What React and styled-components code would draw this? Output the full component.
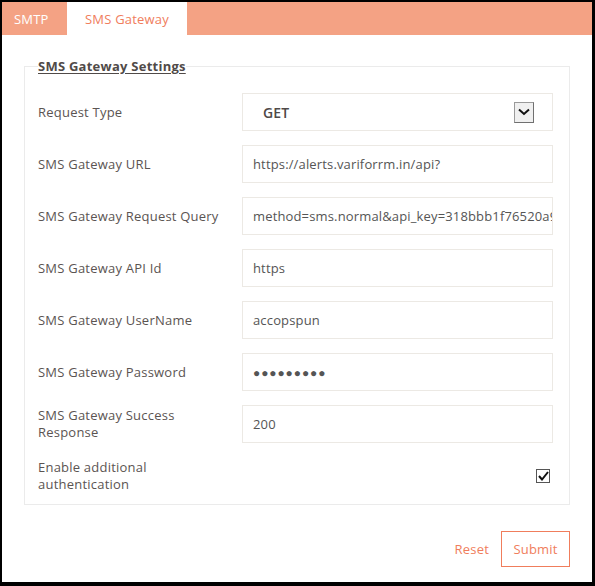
import React from "react";
import styled, { createGlobalStyle } from "styled-components";

const Global = createGlobalStyle`
  html, body { margin: 0; padding: 0; background: #000; }
  body { font-family: "Open Sans", "Noto Sans", sans-serif; }
  * { box-sizing: border-box; }
`;

const Frame = styled.div`
  width: 595px;
  height: 586px;
  background: #fff;
  border-style: solid;
  border-color: #000;
  border-width: 2px 3px 4px 2px;
  display: flex;
  flex-direction: column;
`;

const TabBar = styled.div`
  height: 33px;
  background: #f4a284;
  display: flex;
  flex-shrink: 0;
`;

const Tab = styled.div`
  width: ${(p) => p.$w}px;
  padding-left: ${(p) => p.$pl}px;
  display: flex;
  align-items: center;
  font-size: 13px;
  letter-spacing: 0.2px;
  background: ${(p) => (p.$active ? "#fff" : "transparent")};
  color: ${(p) => (p.$active ? "#f07d5c" : "#fff")};
`;

const Body = styled.div`
  padding: 22px 22px 0 22px;
`;

const Fieldset = styled.fieldset`
  margin: 0;
  border: 1px solid #ebebeb;
  padding: 18px 14px 9px 13px;
  min-width: 0;
`;

const Legend = styled.legend`
  padding: 0;
  font-size: 13px;
  line-height: 18px;
  font-weight: 700;
  letter-spacing: 0.25px;
  color: #504a48;
  text-decoration: underline;
  text-underline-offset: 2px;
`;

const Grid = styled.div`
  display: grid;
  grid-template-columns: 204px 311px;
  grid-auto-rows: 38px;
  row-gap: 14px;
`;

const Label = styled.div`
  max-width: 192px;
  align-self: center;
  font-size: 13px;
  line-height: 17px;
  letter-spacing: 0.22px;
  color: #5b5452;
`;

const Field = styled.div`
  border: 1px solid #ece9e4;
  display: flex;
  align-items: center;
  padding: 0 10px;
  font-size: 13px;
  letter-spacing: 0.15px;
  color: #555;
  overflow: hidden;
  white-space: nowrap;
`;

const SelectValue = styled.span`
  flex: 1;
  padding-left: 10px;
  font-size: 14px;
  font-weight: 600;
  color: #4f4a48;
`;

const ArrowBox = styled.span`
  width: 20px;
  height: 21px;
  margin-right: 8px;
  border: 1px solid #9a9a9a;
  border-right-color: #707070;
  border-bottom-color: #707070;
  background: #f0f0f0;
  display: flex;
  align-items: center;
  justify-content: center;
`;

const Dots = styled.span`
  font-size: 12px;
  letter-spacing: 0.9px;
  color: #555;
`;

const CheckCell = styled.div`
  display: flex;
  align-items: center;
  justify-content: flex-end;
  padding-right: 3px;
`;

const CheckBox = styled.span`
  width: 14px;
  height: 14px;
  border: 1px solid #555;
  background: #fff;
  display: flex;
  align-items: center;
  justify-content: center;
`;

const Actions = styled.div`
  display: flex;
  justify-content: flex-end;
  align-items: center;
  gap: 12px;
  padding-top: 26px;
`;

const TextButton = styled.button`
  background: none;
  border: none;
  padding: 0;
  font-family: inherit;
  font-size: 13px;
  letter-spacing: 0.2px;
  color: #f07d5c;
`;

const OutlineButton = styled(TextButton)`
  width: 69px;
  height: 36px;
  border: 1px solid #f07d5c;
`;

const rows = [
  ["SMS Gateway URL", "https://alerts.variforrm.in/api?"],
  ["SMS Gateway Request Query", "method=sms.normal&api_key=318bbb1f76520a9b"],
  ["SMS Gateway API Id", "https"],
  ["SMS Gateway UserName", "accopspun"],
];

export default function App() {
  return (
    <>
      <Global />
      <Frame>
        <TabBar>
          <Tab $w={65} $pl={12}>SMTP</Tab>
          <Tab $w={120} $pl={18} $active>SMS Gateway</Tab>
        </TabBar>
        <Body>
          <Fieldset>
            <Legend>SMS Gateway Settings</Legend>
            <Grid>
              <Label>Request Type</Label>
              <Field>
                <SelectValue>GET</SelectValue>
                <ArrowBox>
                  <svg width="12" height="8" viewBox="0 0 12 8">
                    <path d="M1 1.5 L6 6 L11 1.5" fill="none" stroke="#111" strokeWidth="2" />
                  </svg>
                </ArrowBox>
              </Field>
              {rows.map(([l, v]) => (
                <React.Fragment key={l}>
                  <Label>{l}</Label>
                  <Field>{v}</Field>
                </React.Fragment>
              ))}
              <Label>SMS Gateway Password</Label>
              <Field>
                <Dots>●●●●●●●●●</Dots>
              </Field>
              <Label>SMS Gateway Success Response</Label>
              <Field>200</Field>
              <Label>Enable additional authentication</Label>
              <CheckCell>
                <CheckBox>
                  <svg width="11" height="10" viewBox="0 0 11 10">
                    <path d="M1 5 L4 8.5 L10 1" fill="none" stroke="#111" strokeWidth="2" />
                  </svg>
                </CheckBox>
              </CheckCell>
            </Grid>
          </Fieldset>
          <Actions>
            <TextButton>Reset</TextButton>
            <OutlineButton>Submit</OutlineButton>
          </Actions>
        </Body>
      </Frame>
    </>
  );
}
